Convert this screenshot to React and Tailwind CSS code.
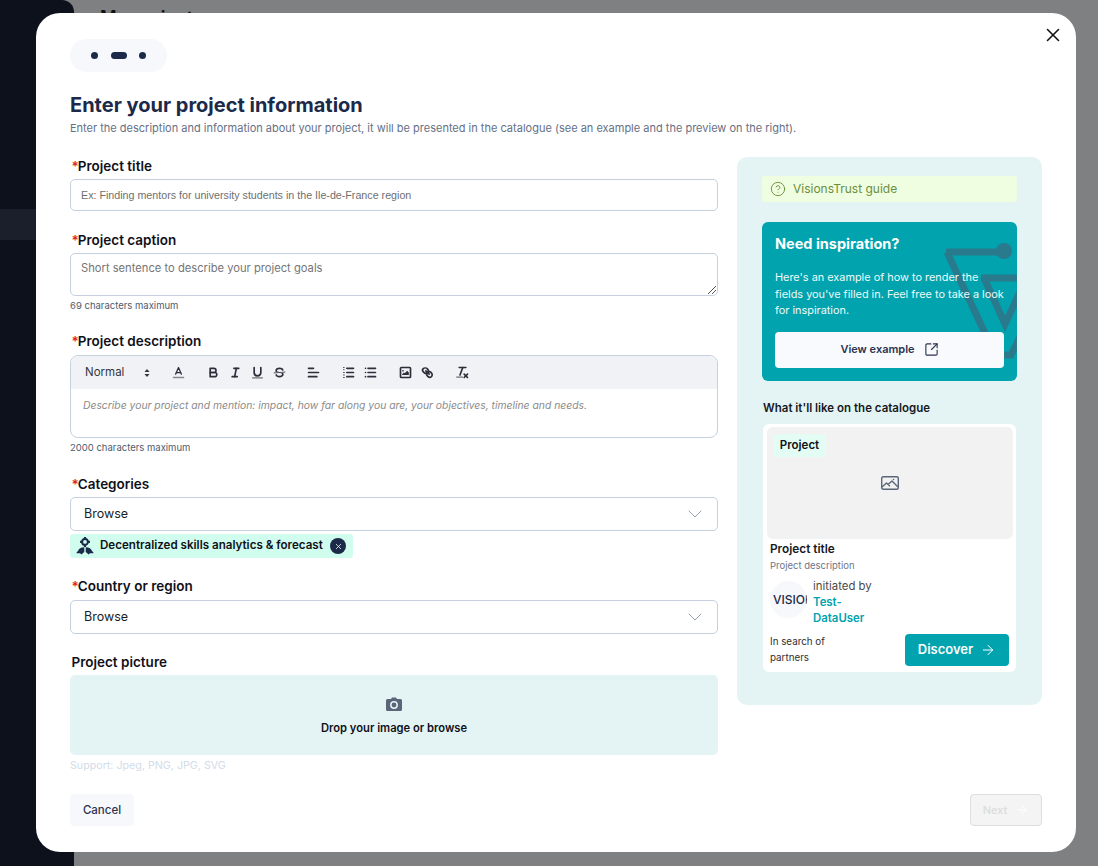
import React from "react";
import { X, CircleHelp, SquareArrowOutUpRight, ArrowRight, ChevronDown } from "lucide-react";

const FONT = "font-['Inter','Noto_Sans',sans-serif]";

const Label = ({ children, required = true }) => (
  <div className="text-[13.5px] leading-[16px] font-semibold text-[#101018] pl-[1.5px]">
    {required && <span className="text-[#e11d2a] mr-[-1px]">*</span>}
    {children}
  </div>
);

const Select = () => (
  <div className="mt-[5px] h-[34px] flex items-center justify-between rounded-[5px] border border-[#c5d1e0] pl-[13px] pr-[10px] text-[12.5px] text-[#1b1d26] bg-white">
    Browse
    <ChevronDown size={24} strokeWidth={1} className="text-[#9aa3b2]" />
  </div>
);

const QuillIcon = ({ children }) => (
  <svg viewBox="0 0 18 18" className="w-[15px] h-[15px] fill-none stroke-[#2b2f3a] stroke-2" strokeLinecap="round" strokeLinejoin="round">
    {children}
  </svg>
);

const Toolbar = () => (
  <div className="h-[33px] bg-[#f1f2f6] rounded-t-[7px] flex items-center pl-[14px] text-[#33363f]">
    <span className="text-[11.5px] w-[53px]">Normal</span>
    <svg viewBox="0 0 18 18" className="w-[18px] h-[18px] fill-[#33363f] mr-[15px]">
      <polygon points="6.500 8 9 5 11.500 8" />
      <polygon points="6.500 10 9 13 11.500 10" />
    </svg>
    <QuillIcon>
      <line x1="3" x2="15" y1="15" y2="15" className="stroke-[#888] stroke-[2]" />
      <polyline points="5.5 11 9 3 12.5 11" className="stroke-[1.5]" />
      <line x1="11.6" x2="6.4" y1="9" y2="9" className="stroke-[1.5]" />
    </QuillIcon>
    <div className="w-[20px]" />
    <QuillIcon>
      <path d="M5,4H9.5A2.5,2.5,0,0,1,12,6.5v0A2.5,2.5,0,0,1,9.5,9H5A0,0,0,0,1,5,9V4A0,0,0,0,1,5,4Z" />
      <path d="M5,9h5.5A2.5,2.5,0,0,1,13,11.5v0A2.5,2.5,0,0,1,10.5,14H5a0,0,0,0,1,0,0V9A0,0,0,0,1,5,9Z" />
    </QuillIcon>
    <div className="w-[7px]" />
    <QuillIcon>
      <line x1="7" x2="13" y1="4" y2="4" />
      <line x1="5" x2="11" y1="14" y2="14" />
      <line x1="8" x2="10" y1="14" y2="4" />
    </QuillIcon>
    <div className="w-[7px]" />
    <QuillIcon>
      <path d="M5,3V9a4.012,4.012,0,0,0,4,4H9a4.012,4.012,0,0,0,4-4V3" />
      <line x1="3" x2="15" y1="15.5" y2="15.5" className="stroke-1" />
    </QuillIcon>
    <div className="w-[7px]" />
    <QuillIcon>
      <line x1="15.5" x2="2.5" y1="8.5" y2="9.5" className="stroke-1" />
      <path className="fill-[#2b2f3a] stroke-0" d="M9.007,8C6.542,7.791,6,7.519,6,6.5,6,5.792,7.283,5,9,5c1.571,0,2.765.679,2.969,1.309a1,1,0,0,0,1.9-.617C13.356,4.106,11.354,3,9,3,6.2,3,4,4.538,4,6.5a3.2,3.2,0,0,0,.5,1.843Z" />
      <path className="fill-[#2b2f3a] stroke-0" d="M8.984,10C11.457,10.208,12,10.479,12,11.5c0,.708-1.283,1.5-3,1.5-1.571,0-2.765-.679-2.969-1.309a1,1,0,1,0-1.9.617C4.644,13.894,6.646,15,9,15c2.8,0,5-1.538,5-3.5a3.2,3.2,0,0,0-.5-1.843Z" />
    </QuillIcon>
    <div className="w-[19px]" />
    <QuillIcon>
      <line x1="3" x2="15" y1="9" y2="9" />
      <line x1="3" x2="13" y1="14" y2="14" />
      <line x1="3" x2="9" y1="4" y2="4" />
    </QuillIcon>
    <div className="w-[20px]" />
    <QuillIcon>
      <line x1="7" x2="15" y1="4" y2="4" />
      <line x1="7" x2="15" y1="9" y2="9" />
      <line x1="7" x2="15" y1="14" y2="14" />
      <line x1="3" x2="3.8" y1="3" y2="3" className="stroke-1" />
      <line x1="3" x2="3.8" y1="5.5" y2="5.5" className="stroke-1" />
      <line x1="3" x2="4" y1="9" y2="9" className="stroke-1" />
      <line x1="3" x2="4" y1="12" y2="12" className="stroke-1" />
      <line x1="3" x2="4" y1="15" y2="15" className="stroke-1" />
    </QuillIcon>
    <div className="w-[7px]" />
    <QuillIcon>
      <line x1="6" x2="15" y1="4" y2="4" />
      <line x1="6" x2="15" y1="9" y2="9" />
      <line x1="6" x2="15" y1="14" y2="14" />
      <line x1="3" x2="3" y1="4" y2="4" />
      <line x1="3" x2="3" y1="9" y2="9" />
      <line x1="3" x2="3" y1="14" y2="14" />
    </QuillIcon>
    <div className="w-[20px]" />
    <QuillIcon>
      <rect x="3" y="3" width="12" height="12" rx="1" className="stroke-2" />
      <circle cx="6" cy="7" r="1" className="fill-[#2b2f3a] stroke-0" />
      <polyline points="5 12 5 11 7 9 8 10 11 7 13 9 13 12 5 12" className="fill-[#2b2f3a] stroke-0" />
    </QuillIcon>
    <div className="w-[7px]" />
    <QuillIcon>
      <line x1="7" x2="11" y1="7" y2="11" />
      <path d="M8.9,4.577a3.476,3.476,0,0,1,.36,4.679A3.476,3.476,0,0,1,4.577,8.9C3.185,7.5,2.231,6.014,3.622,4.622S7.5,3.185,8.9,4.577Z" />
      <path d="M13.423,9.1a3.476,3.476,0,0,0-4.679-.36,3.476,3.476,0,0,0,.36,4.679c1.392,1.392,2.5,2.348,4.319.932S14.815,10.5,13.423,9.1Z" />
    </QuillIcon>
    <div className="w-[20px]" />
    <QuillIcon>
      <line x1="5" x2="13" y1="3" y2="3" />
      <line x1="6" x2="9.35" y1="12" y2="3" />
      <line x1="11" x2="15" y1="11" y2="15" />
      <line x1="15" x2="11" y1="11" y2="15" />
      <line x1="2" x2="9" y1="14.5" y2="14.5" className="stroke-1" />
    </QuillIcon>
  </div>
);

const CategoryIcon = () => (
  <svg viewBox="0 0 20 20" className="w-[18px] h-[18px] fill-[#1c2a4a]">
    <circle cx="10" cy="5.500" r="3.200" fill="none" stroke="#1c2a4a" strokeWidth="2.200" />
    <path d="M8.800 0h2.400v2h-2.400zM8.800 9h2.400v2h-2.400zM4.500 4.300h2v2.400h-2zM13.500 4.300h2v2.400h-2z" />
    <path d="M9.200 11.500v5.200l-2 1.500-1.200 1.300-1.500-1.500H.5c0-1.200 1.500-1.800 2-3 .7-1.900 2.700-3.500 6.700-3.500zM10.800 11.500v5.200l2 1.500 1.200 1.300 1.500-1.500h4c0-1.200-1.500-1.800-2-3-.7-1.900-2.700-3.500-6.700-3.500z" />
  </svg>
);

const CameraIcon = () => (
  <svg viewBox="0 0 18 16" className="w-[18px] h-[16px]">
    <path fill="#5a6579" d="M6 2l1-1.500h4L12 2h3.500A1.500 1.500 0 0 1 17 3.500v9a1.500 1.500 0 0 1-1.500 1.500h-13A1.500 1.500 0 0 1 1 12.500v-9A1.500 1.500 0 0 1 2.500 2z" />
    <circle cx="9" cy="8" r="3.200" fill="none" stroke="#e4f4f4" strokeWidth="1.500" />
  </svg>
);

const PictureIcon = () => (
  <svg viewBox="0 0 18 14" className="w-[18px] h-[14px] fill-none stroke-[#5a6579] stroke-[1.4]" strokeLinejoin="round">
    <rect x="0.7" y="0.7" width="16.600" height="12.600" rx="1.500" />
    <path d="M1 11l4.500-4 3.500 3.200M7 8.500L11 5l6 6" />
    <circle cx="12.500" cy="3.500" r="0.800" className="fill-[#5a6579] stroke-0" />
  </svg>
);

const Watermark = () => (
  <svg viewBox="0 0 255 159" className="absolute inset-0 w-[255px] h-[159px]" fill="none" stroke="#2a7a8e" strokeWidth="7">
    <path d="M184 30 H240 M185 30 L228 122 M219 56 H255 M222 56 L243 102 L258 70 M240 133 H249 L258 115" />
    <circle cx="242" cy="29" r="8" fill="#2a7a8e" stroke="none" />
  </svg>
);

export default function App() {
  return (
    <div className={`relative h-[866px] w-[1098px] overflow-hidden bg-[#7f8082] ${FONT}`}>
      {/* page behind the dialog */}
      <div className="flex h-full">
        <div className="w-[74px] bg-[#0c111c] rounded-tr-[12px] pt-[209px]">
          <div className="h-[31px] bg-[#1a1f2b]" />
        </div>
        <div className="pl-[26px] pt-[4px] text-[18px] font-semibold text-[#111]">My projects</div>
      </div>

      {/* dialog */}
      <div className="absolute left-[36px] top-[13px] w-[1040px] h-[839px] bg-white rounded-[24px] px-[34px] pt-[26px]">
        <button className="absolute right-[12px] top-[11px] text-[#111]">
          <X size={22} strokeWidth={1.7} />
        </button>

        <div className="w-[97px] h-[33px] rounded-full bg-[#f7f8fb] flex items-center justify-center gap-[12.5px]">
          <span className="w-[7px] h-[7px] rounded-full bg-[#1c2a4a]" />
          <span className="w-[16px] h-[7px] rounded-full bg-[#1c2a4a]" />
          <span className="w-[7px] h-[7px] rounded-full bg-[#1c2a4a]" />
        </div>

        <h1 className="mt-[21px] text-[20px] leading-[24px] font-bold text-[#1c2a4a]">Enter your project information</h1>
        <p className="mt-[4px] text-[11px] leading-[14px] text-[#667085] whitespace-nowrap">
          Enter the description and information about your project, it will be presented in the catalogue (see an example and the preview on the right).
        </p>

        <div className="mt-[22px] flex gap-[19px] items-start">
          {/* form */}
          <div className="w-[648px] pt-[1px]">
            <Label>Project title</Label>
            <div className="mt-[5px] h-[32px] flex items-center rounded-[5px] border border-[#c5d1e0] px-[10px] font-['Liberation_Sans',sans-serif] text-[10.7px] text-[#6f6f6f]">
              Ex: Finding mentors for university students in the Ile-de-France region
            </div>

            <div className="mt-[21px]"><Label>Project caption</Label></div>
            <div className="relative mt-[5px] h-[43px] rounded-[5px] border border-[#c5d1e0] px-[10px] pt-[6px] text-[11.2px] text-[#757575]">
              Short sentence to describe your project goals
              <svg viewBox="0 0 8 8" className="absolute right-[1px] bottom-[1px] w-[8px] h-[8px] stroke-[#555]">
                <path d="M0 8L8 0M4 8L8 4" />
              </svg>
            </div>
            <div className="mt-[4px] text-[9.5px] leading-[12px] text-[#4f5b6e]">69 characters maximum</div>

            <div className="mt-[21px]"><Label>Project description</Label></div>
            <div className="mt-[6px] h-[83px] rounded-[8px] border border-[#c5d1e0]">
              <Toolbar />
              <div className="px-[12px] pt-[9px] text-[10.35px] italic text-[#8b8b8b]">
                Describe your project and mention: impact, how far along you are, your objectives, timeline and needs.
              </div>
            </div>
            <div className="mt-[4px] text-[9.5px] leading-[12px] text-[#4f5b6e]">2000 characters maximum</div>

            <div className="mt-[22px]"><Label>Categories</Label></div>
            <Select />
            <div className="mt-[3px] w-[283px] h-[24px] rounded-[3px] bg-[#d1fdee] flex items-center pl-[6px] gap-[6px] text-[11.6px] font-semibold text-[#101018] whitespace-nowrap">
              <CategoryIcon />
              Decentralized skills analytics &amp; forecast
              <span className="ml-auto mr-[7px] w-[16px] h-[16px] rounded-full bg-[#1c2a4a] flex items-center justify-center shrink-0">
                <X size={9} strokeWidth={2} className="text-white" />
              </span>
            </div>

            <div className="mt-[20px]"><Label>Country or region</Label></div>
            <div className="pt-[1px]"><Select /></div>

            <div className="mt-[20px]"><Label required={false}>Project picture</Label></div>
            <div className="mt-[5px] h-[80px] rounded-[5px] bg-[#e4f4f4] flex flex-col items-center justify-center gap-[7px] pt-[2px]">
              <CameraIcon />
              <span className="text-[11.2px] leading-[16px] font-semibold text-[#101018]">Drop your image or browse</span>
            </div>
            <div className="mt-[4px] text-[10.7px] leading-[14px] text-[#d3dce8]">Support: Jpeg, PNG, JPG, SVG</div>
          </div>

          {/* guide panel */}
          <div className="w-[305px] h-[548px] rounded-[10px] bg-[#e4f4f4] px-[25px] pt-[19px]">
            <div className="h-[26px] rounded-[3px] bg-[#effde0] flex items-center gap-[7px] pl-[8px] text-[12px] text-[#6b8f3c]">
              <CircleHelp size={16} strokeWidth={1.4} />
              VisionsTrust guide
            </div>

            <div className="relative mt-[20px] h-[159px] rounded-[6px] bg-[#00a3ae] overflow-hidden px-[13px] pt-[13px] text-white">
              <Watermark />
              <div className="relative text-[14.5px] leading-[18px] font-bold">Need inspiration?</div>
              <p className="relative mt-[16px] text-[10.9px] leading-[16.5px] text-[#eefafa]">
                Here's an example of how to render the fields you've filled in. Feel free to take a look for inspiration.
              </p>
              <div className="relative mt-[13px] h-[36px] w-[229px] rounded-[4px] bg-[#f8fafd] flex items-center justify-center gap-[9px] text-[11px] font-semibold text-[#2a3350]">
                View example
                <SquareArrowOutUpRight size={15} strokeWidth={1.8} />
              </div>
            </div>

            <div className="mt-[20px] mx-[1px] text-[11.5px] leading-[14px] font-semibold text-[#17191f]">What it'll like on the catalogue</div>

            <div className="mt-[9px] mx-[1px] h-[248px] rounded-[6px] bg-white pl-[4px] pr-[3px] py-[3px]">
              <div className="relative h-[112px] rounded-[6px] bg-[#f2f2f2] flex items-center justify-center">
                <span className="absolute left-[6px] top-[7px] h-[23px] w-[53px] rounded-[3px] bg-[#e3fdf5] flex items-center justify-center text-[11.5px] leading-[15px] font-semibold text-[#101018]">Project</span>
                <PictureIcon />
              </div>
              <div className="px-[3px]">
                <div className="mt-[3px] text-[11.8px] leading-[14px] font-semibold text-[#17191f]">Project title</div>
                <div className="mt-[3px] text-[9.5px] leading-[13px] text-[#6d7689]">Project description</div>
                <div className="mt-[5px] flex gap-[6px]">
                  <div className="mt-[4px] w-[37px] h-[37px] rounded-full bg-[#f7f8fb] overflow-hidden flex items-center">
                    <span className="pl-[3px] text-[12px] font-medium text-[#1c2a4a] whitespace-nowrap">VISIONS</span>
                  </div>
                  <div className="text-[11.4px] leading-[16px] text-[#4a4a4a] pt-[1px]">
                    initiated by
                    <div className="font-semibold text-[#00a3ae] w-[60px]">Test-DataUser</div>
                  </div>
                </div>
                <div className="mt-[8px] flex items-center justify-between">
                  <div className="w-[80px] text-[9.8px] leading-[16px] text-[#2f2f2f]">In search of partners</div>
                  <div className="mr-[1px] h-[32px] w-[104px] rounded-[4px] bg-[#00a3ae] flex items-center justify-center gap-[7px] text-white text-[13px] font-semibold">
                    Discover
                    <ArrowRight size={16} strokeWidth={1.5} />
                  </div>
                </div>
              </div>
            </div>
          </div>
        </div>

        {/* footer */}
        <div className="absolute left-[34px] right-[34px] top-[781px] flex justify-between">
          <div className="h-[32px] w-[64px] rounded-[4px] bg-[#f7f8fb] flex items-center justify-center text-[11.5px] leading-[16px] font-medium text-[#2a3350]">Cancel</div>
          <div className="h-[32px] w-[72px] rounded-[4px] border border-[#dedede] bg-[#f4f4f4] flex items-center justify-center gap-[8px] text-[11px] leading-[16px] font-medium text-[#dcdcdc]">
            Next
            <ArrowRight size={14} strokeWidth={1.5} className="text-white" />
          </div>
        </div>
      </div>
    </div>
  );
}
